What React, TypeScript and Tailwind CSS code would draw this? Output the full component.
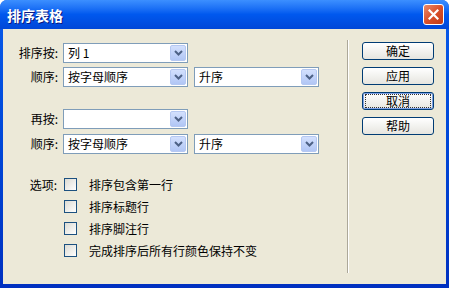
import React from "react";

const font = { fontFamily: '"Noto Sans CJK SC", "Noto Sans", sans-serif' };

function Chevron() {
  return (
    <svg width="9" height="6" viewBox="0 0 9 6">
      <path d="M1 1 L4.5 4.5 L8 1" fill="none" stroke="#4D6185" strokeWidth="2" />
    </svg>
  );
}

function Select({ value }: { value: string }) {
  return (
    <div className="flex h-[20px] w-[125px] items-center border border-[#7F9DB9] bg-white p-[1px]">
      <span className="flex-1 pl-[3px] text-[12px] leading-none text-black">{value}</span>
      <div className="flex h-[16px] w-[16px] items-center justify-center rounded-[2px] border border-[#B5C8F2] bg-gradient-to-b from-[#D3E0FD] to-[#B1C6F5]">
        <Chevron />
      </div>
    </div>
  );
}

function Row({ label, children }: { label: string; children: React.ReactNode }) {
  return (
    <div className="flex h-[20px] items-center">
      <div className="w-[57px] pr-[2px] text-right text-[12px] leading-none text-black">{label}</div>
      <div className="ml-[3px] flex gap-[6px]">{children}</div>
    </div>
  );
}

function Check({ label }: { label: string }) {
  return (
    <div className="flex h-[13px] items-center">
      <div className="h-[13px] w-[13px] border border-[#1C5180] bg-gradient-to-br from-[#DCDBD3] to-white" />
      <span className="ml-[12px] text-[12px] leading-none text-black">{label}</span>
    </div>
  );
}

function Btn({ label, focused }: { label: string; focused?: boolean }) {
  return (
    <div
      className={
        "flex h-[18px] w-[72px] items-center justify-center rounded-[3px] border border-[#003C74] bg-gradient-to-b from-white to-[#E6E5DF] text-[12px] leading-none text-black " +
        (focused ? "shadow-[inset_0_0_0_1px_#7FA2E6]" : "")
      }
    >
      {focused ? (
        <div className="flex h-[14px] w-[66px] items-center justify-center border border-dotted border-[#333]">{label}</div>
      ) : (
        label
      )}
    </div>
  );
}

export default function App() {
  return (
    <div className="h-[288px] w-[449px] overflow-hidden bg-white" style={font}>
      <div className="flex h-[288px] w-[449px] flex-col rounded-t-[7px] bg-gradient-to-b from-[#0A5BEA] via-[#0047D8] to-[#0030C0]">
        {/* title bar */}
        <div className="flex h-[29px] items-center rounded-t-[7px] bg-gradient-to-b from-[#3C8FFF] via-[#0058EE] to-[#0047D8] pl-[7px] pr-[5px]">
          <span className="text-[14px] font-bold leading-none text-white [text-shadow:1px_1px_0_#0A1A80]">排序表格</span>
          <div className="ml-auto flex h-[21px] w-[21px] items-center justify-center rounded-[3px] border border-white bg-gradient-to-br from-[#E9896A] via-[#D9502A] to-[#C23A14]">
            <svg width="11" height="11" viewBox="0 0 11 11">
              <path d="M1.5 1.5 L9.5 9.5 M9.5 1.5 L1.5 9.5" stroke="white" strokeWidth="2.2" strokeLinecap="square" />
            </svg>
          </div>
        </div>
        {/* body */}
        <div className="mx-[3px] mb-[4px] flex flex-1 bg-[#ECE9D8]">
          <div className="flex w-[344px] flex-col pt-[14px]">
            <Row label="排序按:">
              <Select value="列 1" />
            </Row>
            <div className="mt-[4px]">
              <Row label="顺序:">
                <Select value="按字母顺序" />
                <Select value="升序" />
              </Row>
            </div>
            <div className="mt-[22px]">
              <Row label="再按:">
                <Select value="" />
              </Row>
            </div>
            <div className="mt-[5px]">
              <Row label="顺序:">
                <Select value="按字母顺序" />
                <Select value="升序" />
              </Row>
            </div>
            <div className="mt-[24px] flex">
              <div className="w-[56px] pr-[2px] text-right text-[12px] leading-[13px] text-black">选项:</div>
              <div className="ml-[5px] flex flex-col gap-[9px]">
                <Check label="排序包含第一行" />
                <Check label="排序标题行" />
                <Check label="排序脚注行" />
                <Check label="完成排序后所有行颜色保持不变" />
              </div>
            </div>
          </div>
          <div className="my-[11px] flex w-[2px]">
            <div className="w-[1px] bg-[#ACA899]" />
            <div className="w-[1px] bg-white" />
          </div>
          <div className="flex flex-col gap-[7px] pl-[13px] pt-[13px]">
            <Btn label="确定" />
            <Btn label="应用" />
            <Btn label="取消" focused />
            <Btn label="帮助" />
          </div>
        </div>
      </div>
    </div>
  );
}
